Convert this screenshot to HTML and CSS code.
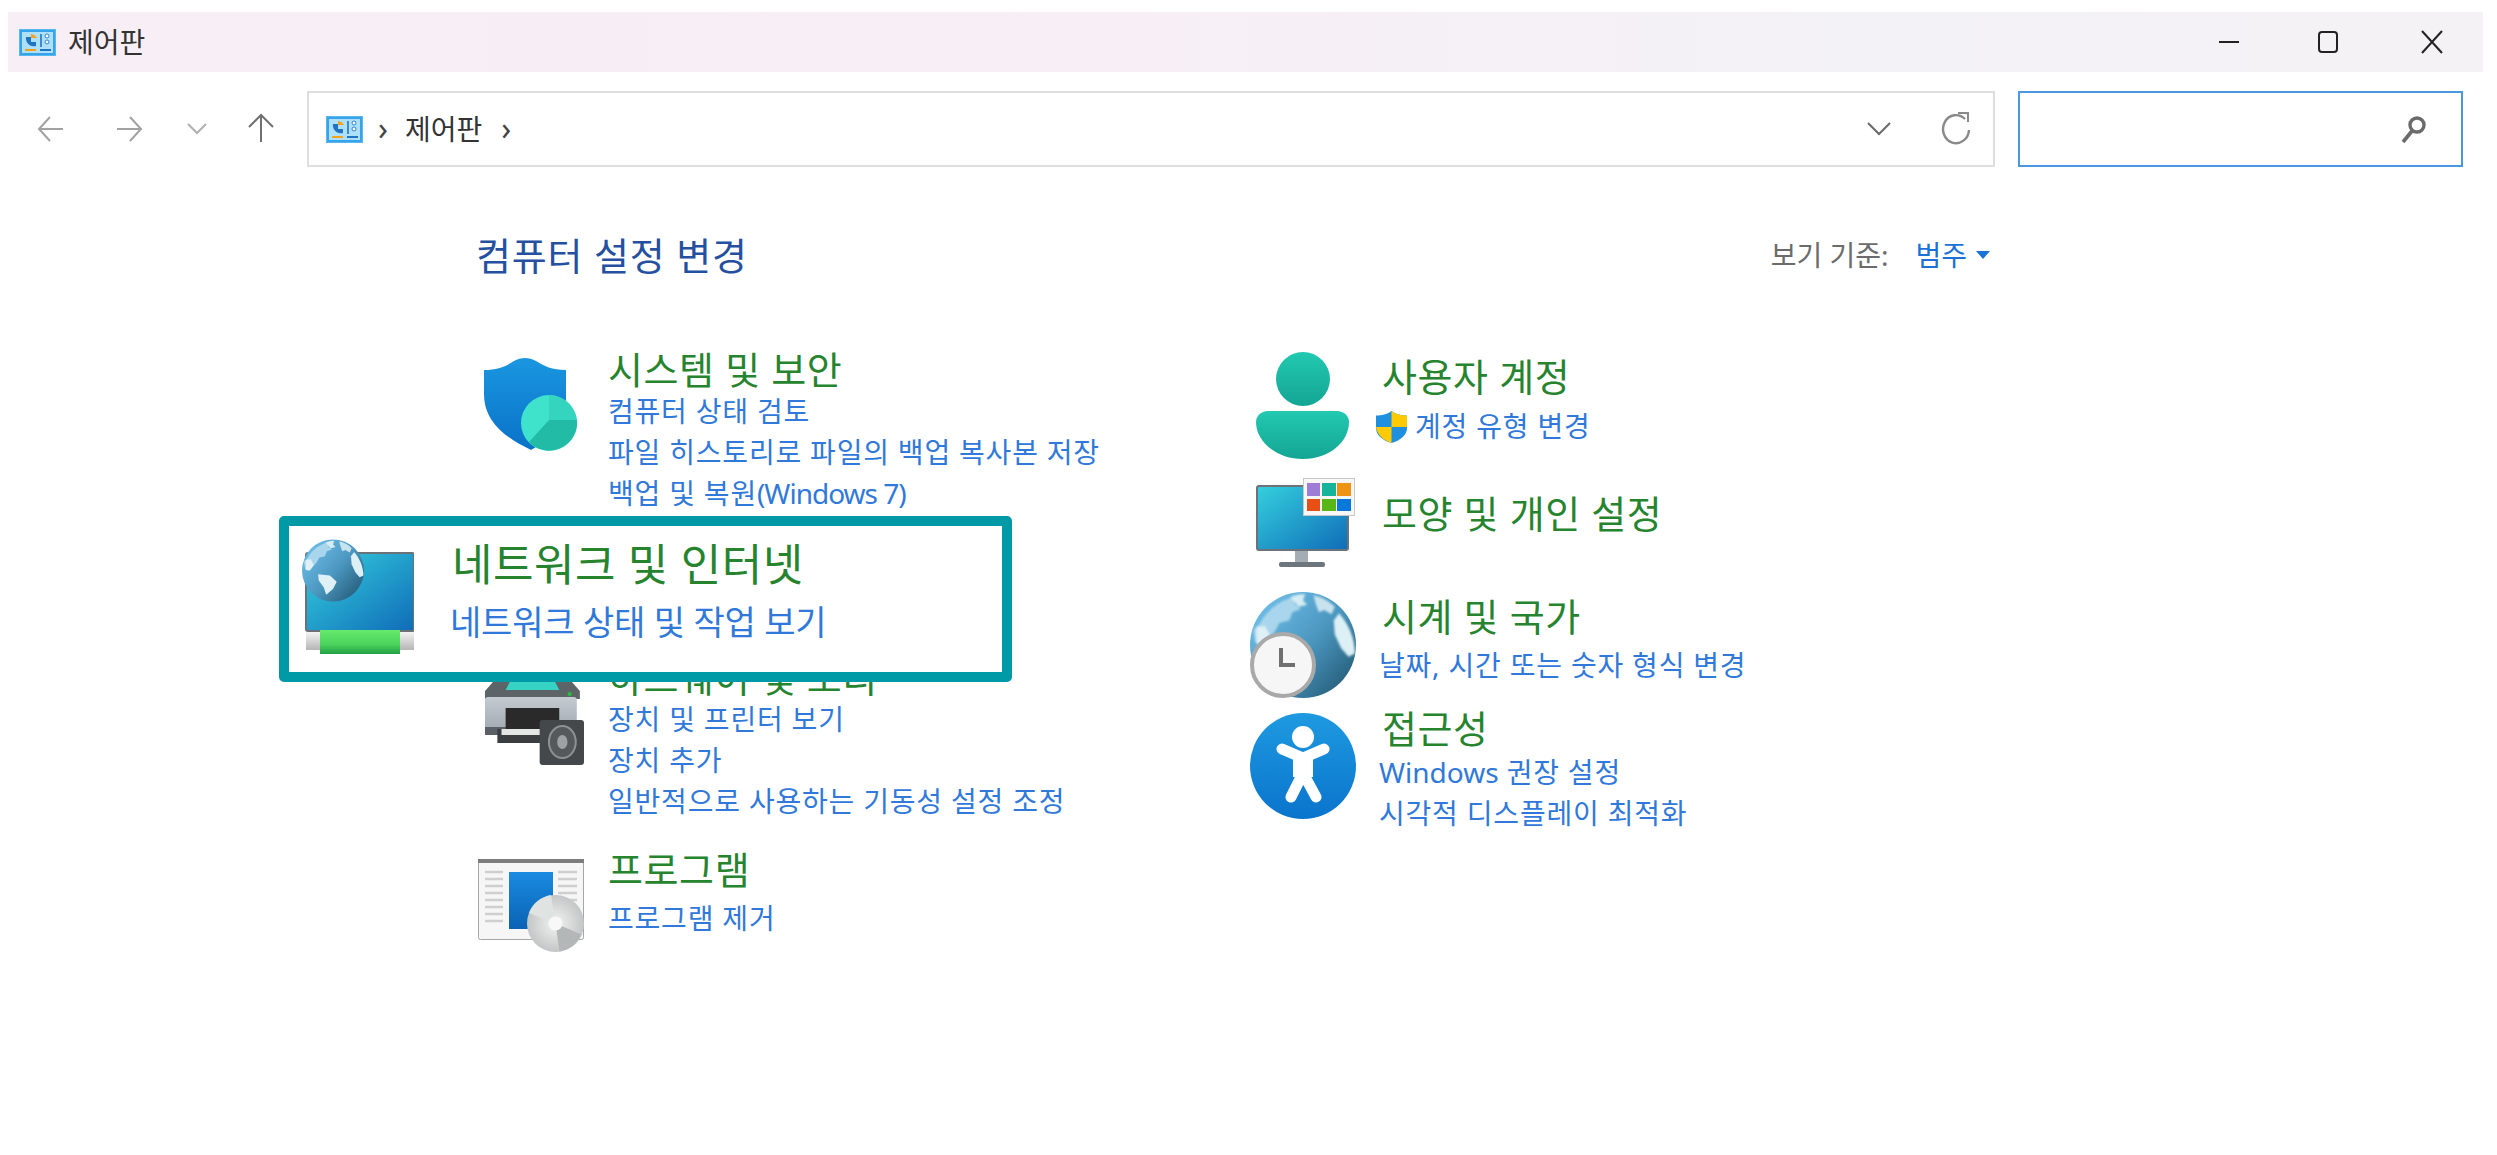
FILE: index.html
```html
<!DOCTYPE html>
<html lang="ko">
<head>
<meta charset="utf-8">
<title>제어판</title>
<link rel="stylesheet" href="styles.css">
</head>
<body>
<svg class="defs" width="0" height="0" aria-hidden="true">
  <defs>
    <linearGradient id="gScreen" x1="0" y1="0" x2="1" y2="1"><stop offset="0" stop-color="#35d0de"/><stop offset="1" stop-color="#0f6cb8"/></linearGradient>
    <linearGradient id="gShield" x1="0" y1="0" x2="0" y2="1"><stop offset="0" stop-color="#1a96e0"/><stop offset="1" stop-color="#0a72c8"/></linearGradient>
    <linearGradient id="gUser" x1="0" y1="0" x2="0" y2="1"><stop offset="0" stop-color="#22c9b0"/><stop offset="1" stop-color="#14a594"/></linearGradient>
    <linearGradient id="gAccess" x1="0" y1="0" x2="0" y2="1"><stop offset="0" stop-color="#1e9ae0"/><stop offset="1" stop-color="#0a74cc"/></linearGradient>
    <linearGradient id="gGreen" x1="0" y1="0" x2="0" y2="1"><stop offset="0" stop-color="#66ea6c"/><stop offset="0.6" stop-color="#4bd35d"/><stop offset="1" stop-color="#23a045"/></linearGradient>
    <linearGradient id="gGrey" x1="0" y1="0" x2="0" y2="1"><stop offset="0" stop-color="#f4f4f4"/><stop offset="1" stop-color="#b4b4b4"/></linearGradient>
    <linearGradient id="gPrinter" x1="0" y1="0" x2="0" y2="1"><stop offset="0" stop-color="#c4cbd1"/><stop offset="1" stop-color="#9ea6ad"/></linearGradient>
    <linearGradient id="gDoc" x1="0" y1="0" x2="0" y2="1"><stop offset="0" stop-color="#1a8be0"/><stop offset="1" stop-color="#0a62b4"/></linearGradient>
    <linearGradient id="gGlobe" x1="0.1" y1="0.15" x2="0.95" y2="0.9"><stop offset="0" stop-color="#6cbbe6"/><stop offset="0.5" stop-color="#4b97c0"/><stop offset="1" stop-color="#245a76"/></linearGradient>
    <radialGradient id="gDisc" cx="0.5" cy="0.5" r="0.55"><stop offset="0" stop-color="#f2f2f2"/><stop offset="1" stop-color="#bfc2c2"/></radialGradient>
    <filter id="soft" x="-10%" y="-10%" width="120%" height="120%"><feGaussianBlur stdDeviation="0.9"/></filter>
    <symbol id="cpanel" viewBox="0 0 37 27">
      <rect x="0.5" y="0.5" width="36" height="26" fill="#37a3ea" stroke="#58b8f0"/>
      <rect x="3" y="3" width="31" height="21" fill="#aee0fb"/>
      <path d="M7 8h5v5h5v4a8 8 0 0 1-10-9z" fill="#1f74c4"/>
      <path d="M12 5a8 8 0 0 1 6 4h-6z" fill="#f2a21c"/>
      <path d="M22 5v13" stroke="#1f74c4" stroke-width="1.6"/>
      <circle cx="28" cy="7" r="2" fill="#fff" stroke="#2b85cf"/>
      <circle cx="28" cy="13" r="2" fill="#fff" stroke="#2b85cf"/>
      <rect x="6" y="20" width="11" height="2" fill="#f2a21c"/>
      <rect x="21" y="20" width="11" height="2" fill="#1f74c4"/>
    </symbol>
    <symbol id="globe" viewBox="0 0 100 100">
      <circle cx="50" cy="50" r="50" fill="url(#gGlobe)"/>
      <g filter="url(#soft)">
        <path d="M9 30C17 15 32 6 44 4l-2 7 6 5-8 3-3 8-9 2-5 9-6 6-6 6-6-3-2-11z" fill="#a9d6ec"/>
        <path d="M38 5c4-2 9-3 14-3l-2 6 4 4-8 2z" fill="#d6ecf4"/>
        <path d="M60 3c9 2 15 6 20 11l-3 7-7-4-5 2-3-8z" fill="#c9e3ee"/>
        <path d="M84 20c9 10 15 24 15 38l-6 3-7-8-6-13-1-13z" fill="#dcf0f5"/>
        <path d="M6 33l8-1 5 9-6 9-7-1z" fill="#dff0f6"/>
        <path d="M26 56l19 2 11 10-6 12-11 9-4-12-8-11z" fill="#dff0f6"/>
      </g>
    </symbol>
  </defs>
</svg>

<div class="titlebar">
  <svg class="ico-cp"><use href="#cpanel"/></svg>
  <span class="title-text">제어판</span>
  <div class="win-controls">
    <svg class="win-btn win-min" viewBox="0 0 24 24"><path d="M2 12h20" stroke="#222" stroke-width="2"/></svg>
    <svg class="win-btn" viewBox="0 0 24 24"><rect x="3" y="2" width="18" height="20" rx="3" fill="none" stroke="#222" stroke-width="2"/></svg>
    <svg class="win-btn" viewBox="0 0 24 24"><path d="M2 1l20 22M22 1L2 23" stroke="#222" stroke-width="2" fill="none"/></svg>
  </div>
</div>

<div class="toolbar">
  <div class="nav">
    <svg class="nav-ico" viewBox="0 0 30 30"><path d="M27 15H3M14 3L3 15l11 12" fill="none" stroke="#a2a2a2" stroke-width="2"/></svg>
    <svg class="nav-ico" viewBox="0 0 30 30"><path d="M3 15h24M16 3l11 12-11 12" fill="none" stroke="#a2a2a2" stroke-width="2"/></svg>
    <svg class="nav-chev" viewBox="0 0 20 12"><path d="M1 1l9 9 9-9" fill="none" stroke="#b0b0b0" stroke-width="2"/></svg>
    <svg class="nav-ico" viewBox="0 0 30 30"><path d="M15 29V3M3 14L15 2l12 12" fill="none" stroke="#707070" stroke-width="2"/></svg>
  </div>
  <div class="address">
    <svg class="ico-cp"><use href="#cpanel"/></svg>
    <span class="crumb-sep">›</span>
    <span class="crumb">제어판</span>
    <span class="crumb-sep crumb-sep-end">›</span>
    <svg class="addr-chev" viewBox="0 0 24 14"><path d="M1 1l11 11L23 1" fill="none" stroke="#6a6a6a" stroke-width="2"/></svg>
    <svg class="addr-refresh" viewBox="0 0 30 34"><path d="M24 7A13 14 0 1 0 28 18" fill="none" stroke="#8a8a8a" stroke-width="2.4"/><path d="M17 1h10v9" fill="none" stroke="#8a8a8a" stroke-width="2"/></svg>
  </div>
  <div class="search">
    <svg class="search-ico" viewBox="0 0 26 30"><circle cx="16" cy="11" r="7" fill="none" stroke="#6a6a6a" stroke-width="3.4"/><path d="M11 17L2 28" stroke="#6a6a6a" stroke-width="3.6"/></svg>
  </div>
</div>

<main class="panel">
  <div class="panel-head">
    <h1 class="panel-title">컴퓨터 설정 변경</h1>
    <div class="view-by"><span class="view-label">보기 기준:</span><a class="view-value">범주</a><span class="caret"></span></div>
  </div>

  <div class="columns">
    <div class="col col-left">
      <section class="cat cat-security">
        <div class="icon-box">
          <svg class="icon icon-shield" viewBox="0 0 96 96">
            <path d="M0 12C14 12 22 8 30 3c7-4 15-4 22 0 8 5 16 9 30 9v30c0 24-14 38-35 50C22 80 0 64 0 36z" fill="url(#gShield)"/>
            <circle cx="65" cy="65" r="28" fill="#3fe3cc"/>
            <path d="M65 37a28 28 0 0 1 28 28l-28 0z" fill="#35d4be"/>
            <path d="M93 62a28 28 0 0 1-48 22l20-22z" fill="#21bba6"/>
          </svg>
        </div>
        <div class="cat-text">
          <h2 class="cat-title">시스템 및 보안</h2>
          <a class="cat-link">컴퓨터 상태 검토</a>
          <a class="cat-link">파일 히스토리로 파일의 백업 복사본 저장</a>
          <a class="cat-link">백업 및 복원<span class="latin-tight">(Windows 7)</span></a>
        </div>
      </section>

      <section class="cat cat-hardware">
        <div class="icon-box">
          <svg class="icon icon-printer" viewBox="0 0 96 96" preserveAspectRatio="none">
            <path d="M12 8h68l12 14v8H0v-8z" fill="#5d6468"/>
            <path d="M24 13h44l4 8H20z" fill="#36d3c4"/>
            <rect x="0" y="28" width="89" height="38" rx="3" fill="url(#gPrinter)"/>
            <circle cx="82" cy="25" r="2" fill="#25c23a"/>
            <rect x="0" y="58" width="89" height="8" fill="#5a6065"/>
            <rect x="20" y="39" width="52" height="22" fill="#2a2a2a"/>
            <rect x="12" y="60" width="68" height="14" fill="#3b3e41"/>
            <path d="M16 60h50v6H16z" fill="#e4e6e6"/>
            <rect x="53" y="51" width="43" height="45" rx="3" fill="#45484b"/>
            <ellipse cx="75" cy="73" rx="13" ry="16" fill="#55595c" stroke="#8d9194" stroke-width="2"/>
            <ellipse cx="75" cy="73" rx="5" ry="7" fill="#9ea2a5"/>
          </svg>
        </div>
        <div class="cat-text">
          <h2 class="cat-title">하드웨어 및 소리</h2>
          <a class="cat-link">장치 및 프린터 보기</a>
          <a class="cat-link">장치 추가</a>
          <a class="cat-link">일반적으로 사용하는 기동성 설정 조정</a>
        </div>
      </section>

      <section class="cat cat-programs">
        <div class="icon-box">
          <svg class="icon icon-programs" viewBox="0 0 106 93">
            <rect x="0.5" y="0.5" width="105" height="80" rx="2" fill="#f6f6f6" stroke="#a6a6a6"/>
            <rect x="0" y="0" width="106" height="4" fill="#7d7d7d"/>
            <path d="M7 13h18M7 20h18M7 27h18M7 34h18M7 41h18M7 48h18M7 55h18M7 62h18M80 13h19M80 20h19M80 27h19M80 34h19M80 41h19" stroke="#cfcfcf" stroke-width="2.4"/>
            <rect x="31" y="13" width="44" height="57" fill="url(#gDoc)"/>
            <circle cx="77.5" cy="64.5" r="28.5" fill="url(#gDisc)"/>
            <path d="M77.5 64.5L51 54a28.5 28.5 0 0 1 22-18z" fill="#dfe4e2"/>
            <path d="M77.5 64.5l26 11a28.5 28.5 0 0 1-22 17z" fill="#b4b7b7"/>
            <circle cx="77.5" cy="64.5" r="7" fill="#f8f8f8"/>
          </svg>
        </div>
        <div class="cat-text">
          <h2 class="cat-title">프로그램</h2>
          <a class="cat-link cat-link-spaced">프로그램 제거</a>
        </div>
      </section>
    </div>

    <div class="col col-right">
      <section class="cat cat-user">
        <div class="icon-box">
          <svg class="icon icon-user" viewBox="0 0 93 107">
            <ellipse cx="47" cy="27" rx="27" ry="27" fill="url(#gUser)"/>
            <path d="M12 59h69c7 0 12 5 12 11 0 20-20 37-46 37S0 90 0 70c0-6 5-11 12-11z" fill="url(#gUser)"/>
          </svg>
        </div>
        <div class="cat-text">
          <h2 class="cat-title">사용자 계정</h2>
          <a class="cat-link cat-link-shield">
            <svg class="uac" viewBox="0 0 32 36" preserveAspectRatio="none">
              <path d="M16 0c5 4 10 5 16 5v14c0 8-7 14-16 17C7 33 0 27 0 19V5c6 0 11-1 16-5z" fill="#1f8fe0"/>
              <path d="M16 0c5 4 10 5 16 5v13H16z" fill="#ffcb00"/>
              <path d="M16 18H0c1 8 7 15 16 18z" fill="#ffcb00"/>
            </svg>계정 유형 변경</a>
        </div>
      </section>

      <section class="cat cat-appearance">
        <div class="icon-box">
          <svg class="icon icon-appearance" viewBox="0 0 99 89">
            <rect x="1" y="8" width="91" height="64" rx="2" fill="url(#gScreen)" stroke="#6c7277" stroke-width="2"/>
            <rect x="39" y="73" width="13" height="11" fill="#a4adb3"/>
            <rect x="23" y="84" width="46" height="5" rx="2" fill="#6d767c"/>
            <rect x="47.5" y="0.5" width="51" height="37" fill="#f7f7f7" stroke="#c8c8c8"/>
            <rect x="51" y="5" width="13" height="13" fill="#9d7dd6"/>
            <rect x="66" y="5" width="14" height="13" fill="#17b49c"/>
            <rect x="81" y="5" width="14" height="13" fill="#ef9412"/>
            <rect x="51" y="21" width="13" height="12" fill="#e84f14"/>
            <rect x="66" y="21" width="14" height="12" fill="#58b617"/>
            <rect x="81" y="21" width="14" height="12" fill="#0a78d8"/>
          </svg>
        </div>
        <div class="cat-text">
          <h2 class="cat-title">모양 및 개인 설정</h2>
        </div>
      </section>

      <section class="cat cat-clock">
        <div class="icon-box">
          <svg class="icon icon-clock" viewBox="0 0 106 106">
            <use href="#globe" width="106" height="106"/>
            <circle cx="33" cy="73" r="31" fill="#f6f6f6" stroke="#a9a9a9" stroke-width="4"/>
            <path d="M31 56v17h14" fill="none" stroke="#707070" stroke-width="4"/>
          </svg>
        </div>
        <div class="cat-text">
          <h2 class="cat-title">시계 및 국가</h2>
          <a class="cat-link cat-link-spaced">날짜, 시간 또는 숫자 형식 변경</a>
        </div>
      </section>

      <section class="cat cat-access">
        <div class="icon-box">
          <svg class="icon icon-access" viewBox="0 0 106 106">
            <circle cx="53" cy="53" r="53" fill="url(#gAccess)"/>
            <circle cx="53" cy="24" r="11" fill="#fff"/>
            <path d="M32 36l21 9 21-9M53 45v17M53 60L41 84M53 60l13 24" fill="none" stroke="#fff" stroke-width="11" stroke-linecap="round" stroke-linejoin="round"/>
            <path d="M43 42h20v22H43z" fill="#fff"/>
          </svg>
        </div>
        <div class="cat-text">
          <h2 class="cat-title">접근성</h2>
          <a class="cat-link"><span class="latin">Windows</span> 권장 설정</a>
          <a class="cat-link">시각적 디스플레이 최적화</a>
        </div>
      </section>
    </div>
  </div>
</main>

<div class="callout">
  <svg class="callout-icon" viewBox="0 0 112 115">
    <rect x="4" y="14" width="108" height="78" rx="2" fill="url(#gScreen)" stroke="#6c7277" stroke-width="2"/>
    <rect x="4" y="93" width="108" height="18" fill="url(#gGrey)"/>
    <rect x="18" y="91" width="80" height="24" fill="url(#gGreen)"/>
    <use href="#globe" x="0" y="0" width="62" height="63"/>
  </svg>
  <div class="callout-text">
    <div class="callout-title">네트워크 및 인터넷</div>
    <a class="callout-link">네트워크 상태 및 작업 보기</a>
  </div>
</div>
</body>
</html>
```
FILE: styles.css
```css
* { box-sizing: border-box; }
html, body { margin: 0; padding: 0; }
body {
  width: 2497px;
  height: 1155px;
  overflow: hidden;
  position: relative;
  background: #fff;
  font-family: "Noto Sans", "Noto Sans CJK KR", sans-serif;
  color: #222;
}
.defs { position: absolute; }
a { display: block; }

/* title bar */
.titlebar {
  height: 60px;
  margin: 12px 14px 0 8px;
  padding-left: 11px;
  display: flex;
  align-items: center;
  background: linear-gradient(90deg, #f8eef5 0%, #f7eff5 45%, #f3f2f6 75%, #f5f2f5 100%);
}
.ico-cp { width: 37px; height: 27px; flex: none; }
.title-text { margin-left: 12px; font-size: 28px; line-height: 1; color: #333; }
.win-controls { margin-left: auto; display: flex; align-items: center; gap: 80px; padding-right: 39px; }
.win-btn { width: 24px; height: 24px; }
.win-min { margin-right: -5px; }

/* toolbar */
.toolbar {
  display: flex;
  margin: 19px 34px 0 0;
  height: 76px;
}
.nav { width: 307px; padding-left: 36px; display: flex; align-items: center; }
.nav-ico { width: 30px; height: 30px; flex: none; }
.nav-chev { width: 20px; height: 12px; flex: none; }
.nav .nav-ico:nth-child(2) { margin-left: 48px; }
.nav .nav-chev { margin-left: 43px; }
.nav .nav-ico:nth-child(4) { margin-left: 39px; margin-top: -2px; }
.address {
  width: 1688px;
  border: 2px solid #dedede;
  display: flex;
  align-items: center;
  padding: 0 20px 0 17px;
}
.crumb { font-size: 28px; line-height: 1; color: #333; margin-left: 17px; }
.crumb-sep { font-size: 32px; line-height: 1; color: #444; margin-left: 15px; margin-top: -3px; }
.crumb-sep-end { margin-left: 19px; }
.addr-chev { width: 24px; height: 14px; margin-left: auto; }
.addr-refresh { width: 30px; height: 34px; margin-left: 50px; margin-right: 2px; }
.search {
  width: 445px;
  margin-left: 23px;
  border: 2px solid #4a98e0;
  display: flex;
  align-items: center;
  justify-content: flex-end;
  padding-right: 34px;
}
.search-ico { width: 26px; height: 30px; }

/* main panel */
.panel { padding-left: 476px; }
.panel-head {
  width: 1514px;
  height: 46px;
  margin-top: 65px;
  display: flex;
  align-items: center;
  justify-content: space-between;
}
.panel-title { margin: 0; font-size: 38px; font-weight: 400; line-height: 46px; color: #24509f; letter-spacing: 0.8px; }
.view-by { display: flex; align-items: center; font-size: 28px; line-height: 1; }
.view-label { color: #6b6b6b; }
.view-value { color: #1a72d8; margin-left: 27px; }
.caret {
  margin-left: 9px;
  border-left: 7px solid transparent;
  border-right: 7px solid transparent;
  border-top: 8px solid #1a72d8;
}
.columns { display: grid; grid-template-columns: 772px 1fr; margin-left: 2px; }
.col-left { padding-top: 70px; }
.col-right { padding-top: 77px; }

.cat { display: flex; align-items: flex-start; }
.icon-box { flex: none; height: 0; }
.col-left .icon-box { width: 130px; }
.col-right .icon-box { width: 132px; }
.icon { display: block; }
.cat-title { margin: 0 0 1px; font-size: 38px; font-weight: 400; line-height: 42px; color: #26842e; letter-spacing: 0.6px; white-space: nowrap; }
.cat-link { font-size: 28px; line-height: 41px; color: #3079da; white-space: nowrap; letter-spacing: 0.8px; }
.col-right .cat-link { margin-left: -3px; }
.latin { letter-spacing: 0; }
.latin-tight { letter-spacing: -1px; }
.cat-link-spaced { margin-top: 8px; }
.col-right .cat-link-shield { display: flex; align-items: center; margin: 9px 0 0 -6px; }
.uac { width: 31px; height: 32px; margin-right: 8px; }

.icon-shield { width: 96px; height: 96px; margin: 10px 0 0 6px; }
.icon-printer { width: 99px; height: 96px; margin: 13px 0 0 7px; }
.icon-programs { width: 106px; height: 93px; margin: 11px 0 0 0; }
.icon-user { width: 93px; height: 107px; margin: -3px 0 0 6px; }
.icon-appearance { width: 99px; height: 89px; margin: -14px 0 0 6px; }
.icon-clock { width: 106px; height: 106px; margin: -3px 0 0 0; }
.icon-access { width: 106px; height: 106px; margin: 6px 0 0 0; }

.cat-security { height: 166px; }
.cat-hardware { height: 165px; margin-top: 142px; }
.cat-programs { margin-top: 27px; }
.cat-user { height: 90px; }
.cat-appearance { height: 42px; margin-top: 47px; }
.cat-clock { height: 91px; margin-top: 61px; }
.cat-access { margin-top: 21px; }
.cat-access .cat-title { margin-bottom: 3px; }

/* highlight callout lying over the panel */
.callout {
  position: absolute;
  left: 279px;
  top: 516px;
  width: 733px;
  height: 166px;
  border: 10px solid #009aa6;
  border-radius: 5px;
  background: #fff;
  display: flex;
  align-items: flex-start;
  padding: 13px 0 0 13px;
}
.callout-icon { width: 112px; height: 115px; flex: none; }
.callout-text { margin-left: 38px; }
.callout-title { font-size: 44px; line-height: 50px; color: #26842e; white-space: nowrap; letter-spacing: 0.5px; }
.callout-link { font-size: 34px; line-height: 46px; margin: 10px 0 0 -2px; color: #3079da; white-space: nowrap; letter-spacing: -0.2px; }
```
